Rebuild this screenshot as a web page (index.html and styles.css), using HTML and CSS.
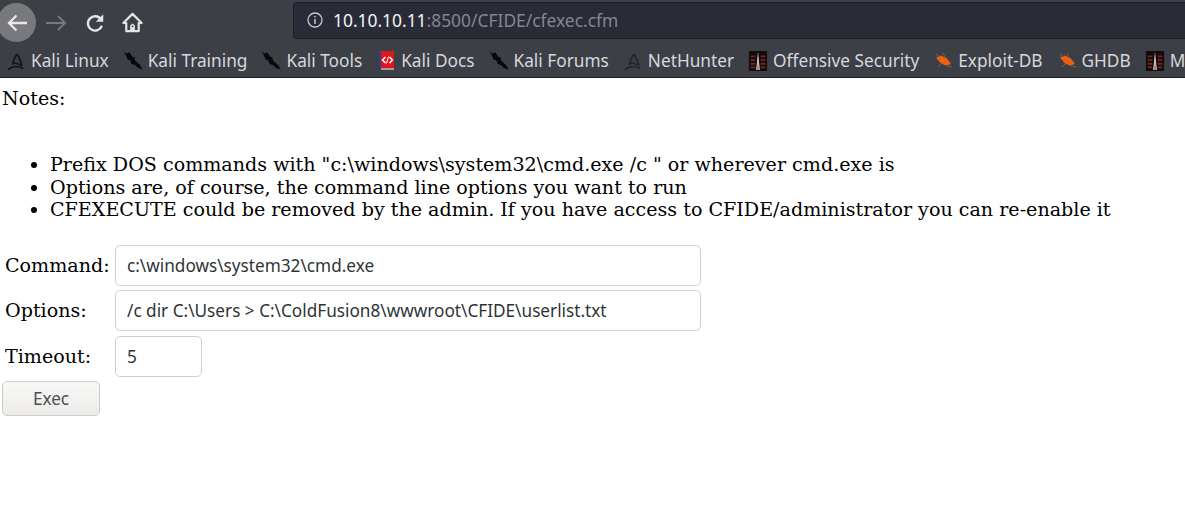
FILE: index.html
```html
<!DOCTYPE html>
<html lang="en">
<head>
  <meta charset="UTF-8">
  <title>cfexec.cfm</title>
  <link rel="stylesheet" href="styles.css">
</head>
<body>
  <header class="browser">
    <div class="toolbar">
      <button class="nav-btn back" aria-label="Back">
        <svg viewBox="0 0 24 24" width="24" height="24"><path d="M22 12H4M11.500 4.500L4 12l7.500 7.500" fill="none" stroke="#e8e8e8" stroke-width="2.300"/></svg>
      </button>
      <button class="nav-btn forward" aria-label="Forward">
        <svg viewBox="0 0 24 24" width="24" height="24"><path d="M2 12h19M14 5l7 7-7 7" fill="none" stroke="#77797e" stroke-width="1.800"/></svg>
      </button>
      <button class="nav-btn reload" aria-label="Reload">
        <svg viewBox="0 0 24 24" width="22" height="22"><path d="M18.500 8A7.800 7.800 0 1 0 19.500 15" fill="none" stroke="#e4e4e4" stroke-width="2.600"/><path d="M21 2.500v8h-8z" fill="#e4e4e4"/></svg>
      </button>
      <button class="nav-btn home" aria-label="Home">
        <svg viewBox="0 0 24 24" width="23" height="23"><path d="M12 3L2.500 12.500H5.500V21H18.500V12.500H21.500z" fill="none" stroke="#e4e4e4" stroke-width="2.300" stroke-linejoin="round"/><path d="M9.500 21v-6l2.500-2 2.500 2v6z" fill="#e4e4e4"/><circle cx="12" cy="16" r="1" fill="#3d3f47"/></svg>
      </button>
      <div class="urlbar">
        <svg class="info" viewBox="0 0 16 16" width="16" height="16"><circle cx="8" cy="8" r="7" fill="none" stroke="#c6c7ca" stroke-width="1.300"/><path d="M8 7v5M8 4v1.600" stroke="#c6c7ca" stroke-width="1.500"/></svg>
        <span class="url"><b>10.10.10.11</b>:8500/CFIDE/cfexec.cfm</span>
      </div>
    </div>
    <nav class="bookmarks">
      <a><svg class="fav" viewBox="0 0 20 20"><path d="M2 19c2-2 5-3.500 8-3.500 2.500 0 5 .5 7 2M11 3C9 6 7 9 6.500 14M11 3c2 3 4 7 5 12M7 12c2 0 5 .5 8 2" fill="none" stroke="#14151a" stroke-width="1.700"/></svg>Kali Linux</a>
      <a><svg class="fav" viewBox="0 0 20 20"><path d="M0 0l3 2.500 3.500-1 3 4.500 2 .5.500 3 5 4.500 2.500 4.500-4.500-1.500-3-3-3.500-1-1-3.500-3-1-2-5z" fill="#08080a"/></svg>Kali Training</a>
      <a><svg class="fav" viewBox="0 0 20 20"><path d="M0 0l3 2.500 3.500-1 3 4.500 2 .5.500 3 5 4.500 2.500 4.500-4.500-1.500-3-3-3.500-1-1-3.500-3-1-2-5z" fill="#08080a"/></svg>Kali Tools</a>
      <a><svg class="fav" viewBox="0 0 20 20"><rect x="3" y="0" width="15" height="18" fill="#e0161c"/><rect x="3" y="0" width="2" height="18" fill="#2b3f8f"/><rect x="5" y="17" width="13" height="2" fill="#9a9ca3"/><path d="M9.500 6L6.500 9l3 3M13.500 6l3 3-3 3" fill="none" stroke="#fff" stroke-width="1.500"/><path d="M12.500 5.500l-2 7" stroke="#fff" stroke-width="1"/></svg>Kali Docs</a>
      <a><svg class="fav" viewBox="0 0 20 20"><path d="M0 0l3 2.500 3.500-1 3 4.500 2 .5.500 3 5 4.500 2.500 4.500-4.500-1.500-3-3-3.500-1-1-3.500-3-1-2-5z" fill="#08080a"/></svg>Kali Forums</a>
      <a><svg class="fav" viewBox="0 0 20 20"><path d="M2 19c2-2 5-3.500 8-3.500 2.500 0 5 .5 7 2M11 3C9 6 7 9 6.500 14M11 3c2 3 4 7 5 12M7 12c2 0 5 .5 8 2" fill="none" stroke="#24252a" stroke-width="1.700"/></svg>NetHunter</a>
      <a><svg class="fav" viewBox="0 0 20 22"><rect width="20" height="22" fill="#150b0b"/><path d="M2 6h5M2 10h5M2 14h5M2 18h5M13 6h5M13 10h5M13 14h5M13 18h5" stroke="#6d2a24" stroke-width="2"/><path d="M10 1l2 20H8z" fill="#eeeae6"/><path d="M10 8l.6 13H9.400z" fill="#3a2020"/></svg>Offensive Security</a>
      <a><svg class="fav" viewBox="0 0 20 20"><path d="M3 6.500l5-2 6 3 4 5.500-5 1.500-5-2z" fill="#ee5f12"/><path d="M3 3l4 3M14 15l5 1M5 16l3-3M10 2l2 4" stroke="#8c5a3e" stroke-width="1"/></svg>Exploit-DB</a>
      <a><svg class="fav" viewBox="0 0 20 20"><path d="M3 6.500l5-2 6 3 4 5.500-5 1.500-5-2z" fill="#ee5f12"/><path d="M3 3l4 3M14 15l5 1M5 16l3-3M10 2l2 4" stroke="#8c5a3e" stroke-width="1"/></svg>GHDB</a>
      <a><svg class="fav" viewBox="0 0 20 22"><rect width="20" height="22" fill="#150b0b"/><path d="M2 6h5M2 10h5M2 14h5M2 18h5M13 6h5M13 10h5M13 14h5M13 18h5" stroke="#6d2a24" stroke-width="2"/><path d="M10 1l2 20H8z" fill="#eeeae6"/><path d="M10 8l.6 13H9.400z" fill="#3a2020"/></svg>M</a>
    </nav>
  </header>

  <main>
    <p class="notes">Notes:</p>
    <ul class="tips">
      <li>Prefix DOS commands with "c:\windows\system32\cmd.exe /c " or wherever cmd.exe is</li>
      <li>Options are, of course, the command line options you want to run</li>
      <li>CFEXECUTE could be removed by the admin. If you have access to CFIDE/administrator you can re-enable it</li>
    </ul>
    <form class="exec-form" onsubmit="return false">
      <label for="cmd">Command:</label>
      <input id="cmd" class="field" type="text" value="c:\windows\system32\cmd.exe">
      <label for="opts">Options:</label>
      <input id="opts" class="field" type="text" value="/c dir C:\Users &gt; C:\ColdFusion8\wwwroot\CFIDE\userlist.txt">
      <label for="timeout">Timeout:</label>
      <input id="timeout" class="field short" type="text" value="5">
    </form>
    <button class="exec-btn" type="button">Exec</button>
  </main>
</body>
</html>
```

FILE: styles.css
```css
* { box-sizing: border-box; }
html, body { overflow: hidden; }
body {
  margin: 0;
  background: #fff;
  color: #000;
  font-family: "DejaVu Serif", serif;
  font-size: 19.100px;
}
.browser {
  height: 78px;
  background: #3d3f47;
  border-bottom: 1px solid #1c1d21;
  font-family: "Noto Sans", sans-serif;
  overflow: hidden;
}
.toolbar {
  display: flex;
  align-items: center;
  height: 42px;
  padding-top: 3px;
}
.nav-btn {
  display: flex;
  align-items: center;
  justify-content: center;
  background: none;
  border: none;
  padding: 0;
  flex: none;
}
.back {
  width: 39px;
  height: 39px;
  margin-left: -3px;
  border-radius: 50%;
  background: #77797c;
}
.forward { width: 36px; margin-left: 2px; }
.reload { width: 32px; margin-left: 5px; }
.home { width: 32px; margin-left: 5px; }
.urlbar {
  display: flex;
  align-items: center;
  flex: none;
  width: 900px;
  height: 37px;
  margin-left: 145px;
  margin-top: -5px;
  padding-left: 13px;
  background: #292b36;
  border: 1px solid #1c1d21;
  border-radius: 4px 0 0 4px;
}
.url {
  margin-left: 10px;
  font-size: 17.400px;
  color: #85878d;
}
.url b { font-weight: 400; color: #f4f4f5; }
.bookmarks {
  display: flex;
  align-items: center;
  gap: 14px;
  height: 37px;
  padding-left: 6px;
  white-space: nowrap;
  font-size: 17.250px;
  color: #d6d8dc;
}
.bookmarks a {
  display: flex;
  align-items: center;
  gap: 5px;
  flex: none;
}
.fav { width: 20px; height: 20px; flex: none; }

main { padding: 0 2px; }
.notes { margin: 10px 0 0; line-height: 22.400px; }
.tips {
  margin: 44px 0 0;
  padding-left: 48px;
  line-height: 22.400px;
}
.exec-form {
  display: grid;
  grid-template-columns: 110px max-content;
  align-items: center;
  row-gap: 4.500px;
  margin-top: 23px;
  padding-left: 3px;
}
.field {
  width: 586px;
  height: 41px;
  padding: 0 11px;
  border: 1px solid #d3d0cb;
  border-radius: 5px;
  background: #fff;
  color: #2e3436;
  font-family: "Noto Sans", sans-serif;
  font-size: 17.200px;
}
.short { width: 87px; }
.exec-btn {
  display: block;
  width: 98px;
  height: 35px;
  margin-top: 4px;
  border: 1px solid #cfccc7;
  border-radius: 5px;
  background: linear-gradient(#f8f8f7, #ecebe9);
  color: #4a4f52;
  font-family: "Noto Sans", sans-serif;
  font-size: 17.200px;
}
```
